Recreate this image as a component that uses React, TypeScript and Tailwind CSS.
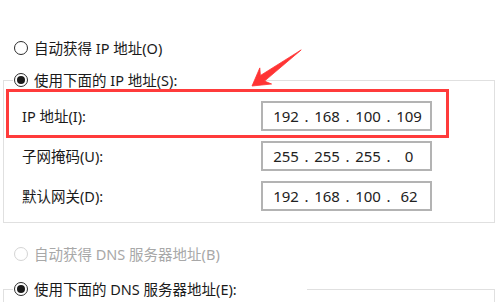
import type { ReactNode } from 'react';

const font = { fontFamily: '"Noto Sans", "Noto Sans CJK SC", sans-serif' };

function Radio({ checked, disabled }: { checked?: boolean; disabled?: boolean }) {
  return (
    <span
      className={`flex h-[14px] w-[14px] shrink-0 items-center justify-center rounded-full border bg-white ${
        disabled ? 'border-[#d4d4d4]' : 'border-[#2b2b2b]'
      }`}
    >
      {checked && <span className="h-[8px] w-[8px] rounded-full bg-[#1a1a1a]" />}
    </span>
  );
}

function RadioRow({ label, checked, disabled }: { label: string; checked?: boolean; disabled?: boolean }) {
  return (
    <div className="flex h-[18px] items-center gap-[6px] pl-[1px]">
      <Radio checked={checked} disabled={disabled} />
      <span className={`text-[14.5px] leading-none ${disabled ? 'text-[#a8a8a8]' : 'text-[#1a1a1a]'}`}>{label}</span>
    </div>
  );
}

function IpInput({ octets }: { octets: string[] }) {
  return (
    <div className="flex h-[30px] w-[171px] items-center border-2 border-[#b3b3b3] bg-white pl-[6px] text-[15px] leading-none text-[#222]">
      {octets.map((o, i) => (
        <div key={i} className="flex">
          {i > 0 && <span className="w-[7px] text-center">.</span>}
          <span className="w-[34px] text-center">{o}</span>
        </div>
      ))}
    </div>
  );
}

function FieldRow({ label, children, pad }: { label: string; children: ReactNode; pad: string }) {
  return (
    <div className={`flex items-center ${pad}`}>
      <span className="w-[239px] text-[14.5px] leading-none text-[#1a1a1a]">{label}</span>
      {children}
    </div>
  );
}

export default function App() {
  return (
    <div className="relative h-[302px] w-[500px] overflow-hidden bg-white pt-[38px]" style={font}>
      <div className="flex h-[20px] items-center pl-[13px]">
        <RadioRow label="自动获得 IP 地址(O)" />
      </div>

      <fieldset className="ml-[3px] mt-[13px] w-[492px] border border-[#e0e0e0] pb-[11px]">
        <legend className="ml-[9px] w-[245px] bg-white">
          <RadioRow label="使用下面的 IP 地址(S):" checked />
        </legend>

        <div className="ml-[2px] flex h-[49px] w-[443px] items-center border-[3px] border-[#ff3b3b] pt-[5px]">
          <FieldRow label="IP 地址(I):" pad="pl-[13px]">
            <IpInput octets={['192', '168', '100', '109']} />
          </FieldRow>
        </div>

        <div className="mt-[3px]">
          <FieldRow label="子网掩码(U):" pad="pl-[18px]">
            <IpInput octets={['255', '255', '255', '0']} />
          </FieldRow>
        </div>
        <div className="mt-[10px]">
          <FieldRow label="默认网关(D):" pad="pl-[18px]">
            <IpInput octets={['192', '168', '100', '62']} />
          </FieldRow>
        </div>
      </fieldset>

      <div className="mt-[21px] flex h-[20px] items-center pl-[13px]">
        <RadioRow label="自动获得 DNS 服务器地址(B)" disabled />
      </div>

      <fieldset className="ml-[3px] mt-[16px] h-[60px] w-[492px] border border-[#e0e0e0]">
        <legend className="ml-[9px] w-[294px] bg-white">
          <RadioRow label="使用下面的 DNS 服务器地址(E):" checked />
        </legend>
      </fieldset>

      {/* red pointer arrow */}
      <svg className="pointer-events-none absolute left-0 top-0" width="500" height="302" viewBox="0 0 500 302">
        <polygon
          points="252,86 259.8,67.9 260.4,75.5 301.2,49.9 264.5,81.1 271.6,84"
          fill="#ff3434"
          stroke="#ff3434"
          strokeWidth="0.8"
          strokeLinejoin="round"
        />
      </svg>
    </div>
  );
}
